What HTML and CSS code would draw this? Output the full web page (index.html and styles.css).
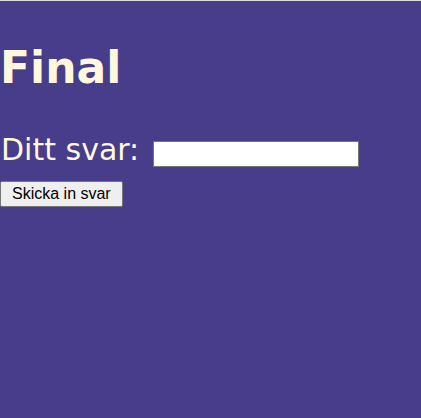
FILE: index.html
```html
<!DOCTYPE html>
<html lang="sv">
<head>
<meta charset="utf-8">
<title>Final</title>
<link rel="stylesheet" href="styles.css">
</head>
<body>
<h1 class="title">Final</h1>
<form class="answer">
  <div class="row">
    <label class="label" for="svar">Ditt svar:</label>
    <input class="field" id="svar" type="text">
  </div>
  <button class="submit" type="button">Skicka in svar</button>
</form>
</body>
</html>
```

FILE: styles.css
```css
html {
  background: #483d8b;
}
body {
  margin: 0;
  border-top: 1px solid #dcdcdc;
  background: #483d8b;
  min-height: 417px;
  font-family: "DejaVu Sans", Verdana, sans-serif;
  color: #fff8dc;
}
.title {
  margin: 42px 0 0 0;
  font-size: 44px;
  font-weight: bold;
  line-height: 50px;
  color: #fff8dc;
}
.answer {
  margin: 40px 0 0 0;
}
.row {
  display: flex;
  align-items: flex-start;
}
.label {
  font-size: 30px;
  line-height: 34px;
  color: #fff8dc;
  padding-left: 1px;
}
.field {
  box-sizing: border-box;
  width: 206px;
  height: 26px;
  margin: 8px 0 0 14px;
  padding: 0 2px;
  border: 1px solid #767676;
  background: #fff;
}
.submit {
  display: block;
  box-sizing: border-box;
  height: 26px;
  margin-top: 14px;
  padding: 0 11px;
  border: 1px solid #767676;
  border-radius: 2px;
  background: #efefef;
  color: #000;
  font-family: "Liberation Sans", Arial, sans-serif;
  font-size: 16px;
}
```
